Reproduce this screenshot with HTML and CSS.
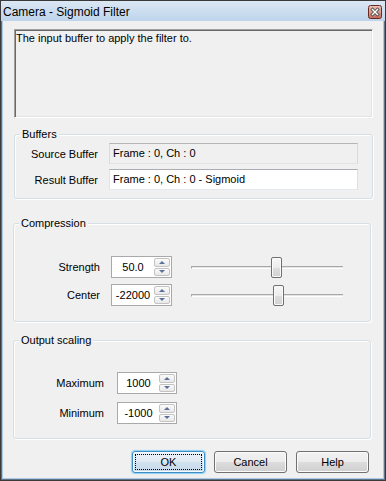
FILE: index.html
```html
<!DOCTYPE html>
<html>
<head>
<meta charset="utf-8">
<title>Camera - Sigmoid Filter</title>
<link rel="stylesheet" href="styles.css">
</head>
<body>
<div class="window">
  <div class="titlebar">
    <span class="title">Camera - Sigmoid Filter</span>
    <svg class="close" width="14" height="14" viewBox="0 0 14 14">
      <defs>
        <linearGradient id="cg" x1="0" y1="0" x2="0" y2="1">
          <stop offset="0" stop-color="#ecc3b9"/>
          <stop offset="0.5" stop-color="#dc9a8c"/>
          <stop offset="1" stop-color="#c46a5a"/>
        </linearGradient>
      </defs>
      <rect x="0.5" y="0.5" width="13" height="13" rx="2" fill="url(#cg)" stroke="#6b2a20"/>
      <path d="M4.5 4.5 L9.5 9.5 M9.5 4.5 L4.5 9.5" stroke="#555" stroke-width="3.2" stroke-linecap="square"/>
      <path d="M4.5 4.5 L9.5 9.5 M9.5 4.5 L4.5 9.5" stroke="#fff" stroke-width="1.4" stroke-linecap="square"/>
    </svg>
  </div>
  <div class="client">
    <div class="desc">The input buffer to apply the filter to.</div>

    <div class="group buffers">
      <div class="group-title">Buffers</div>
      <div class="bgrid">
        <span class="blabel">Source Buffer</span>
        <div class="edit disabled">Frame : 0, Ch : 0</div>
        <span class="blabel">Result Buffer</span>
        <div class="edit">Frame : 0, Ch : 0 - Sigmoid</div>
      </div>
    </div>

    <div class="group compression">
      <div class="group-title">Compression</div>
      <div class="rows crows">
        <div class="row">
          <span class="lbl">Strength</span>
          <div class="spin">
            <span class="val">50.0</span>
            <span class="btns"><span class="sb"><span class="up"></span></span><span class="sb"><span class="down"></span></span></span>
          </div>
          <div class="slider">
            <div class="track"></div>
            <div class="thumb" style="left:80px"></div>
          </div>
        </div>
        <div class="row">
          <span class="lbl">Center</span>
          <div class="spin">
            <span class="val">-22000</span>
            <span class="btns"><span class="sb"><span class="up"></span></span><span class="sb"><span class="down"></span></span></span>
          </div>
          <div class="slider">
            <div class="track"></div>
            <div class="thumb" style="left:82px"></div>
          </div>
        </div>
      </div>
    </div>

    <div class="group output">
      <div class="group-title">Output scaling</div>
      <div class="rows orows">
        <div class="row">
          <span class="lbl">Maximum</span>
          <div class="spin">
            <span class="val">1000</span>
            <span class="btns"><span class="sb"><span class="up"></span></span><span class="sb"><span class="down"></span></span></span>
          </div>
        </div>
        <div class="row">
          <span class="lbl">Minimum</span>
          <div class="spin">
            <span class="val">-1000</span>
            <span class="btns"><span class="sb"><span class="up"></span></span><span class="sb"><span class="down"></span></span></span>
          </div>
        </div>
      </div>
    </div>

    <div class="buttons">
      <button class="btn default"><span>OK</span></button>
      <button class="btn">Cancel</button>
      <button class="btn">Help</button>
    </div>
  </div>
</div>
</body>
</html>
```

FILE: styles.css
```css
html, body {
  margin: 0;
  padding: 0;
  background: #fff;
}
body {
  font-family: "Liberation Sans", Arial, sans-serif;
  font-size: 11px;
  color: #000;
}
.window {
  width: 386px;
  height: 481px;
  box-sizing: border-box;
  border: 1px solid #3a3a3a;
  background: #5f7286;
  display: flex;
  flex-direction: column;
}
.titlebar {
  height: 20px;
  flex: none;
  display: flex;
  align-items: center;
  justify-content: space-between;
  padding: 0 3px 0 2px;
  background: linear-gradient(#dbe7f4, #bed4eb);
}
.title {
  font-size: 12px;
  padding-top: 2px;
  color: #000;
}
.close {
  display: block;
  margin-top: 2px;
}
.client {
  flex: 1;
  margin: 0 1px 1px;
  border: 1px solid #a9c9e6;
  border-top: 0;
  background: #f0f0f0;
  padding: 8px 10px 0 11px;
  display: flex;
  flex-direction: column;
}
.desc {
  height: 89px;
  flex: none;
  box-sizing: border-box;
  border: 1px solid;
  border-color: #a0a0a0 #ffffff #ffffff #a0a0a0;
  box-shadow: inset 1px 1px 0 #696969, inset -1px -1px 0 #e3e3e3;
  padding: 2px 2px 0 1px;
  line-height: 13px;
}
.group {
  border: 1px solid #d5dfe5;
  border-radius: 3px;
  box-shadow: 1px 1px 0 #ffffff, inset 1px 1px 0 #ffffff;
  display: flex;
  flex-direction: column;
  flex: none;
}
.group-title {
  align-self: flex-start;
  margin: -7px 0 0 5px;
  padding: 0 2px;
  line-height: 13px;
  background: #f0f0f0;
}
.buffers {
  margin-top: 16px;
}
.bgrid {
  display: grid;
  grid-template-columns: 83px 249px;
  column-gap: 11px;
  row-gap: 5px;
  align-items: center;
  margin-top: 2px;
  padding-bottom: 8px;
}
.blabel {
  text-align: right;
}
.edit {
  height: 21px;
  box-sizing: border-box;
  border: 1px solid;
  border-color: #abadb3 #dbdfe6 #e3e9ef #e2e3ea;
  background: #fff;
  padding: 0 3px;
  line-height: 19px;
  white-space: nowrap;
}
.edit.disabled {
  background: #f0f0f0;
  border-color: #b5b5b5 #dadada #e3e3e3 #dadada;
}
.compression {
  margin: 24px 2px 0 -1px;
}
.output {
  margin: 18px 2px 0 -1px;
}
.rows {
  display: flex;
  flex-direction: column;
}
.crows {
  gap: 6px;
  margin-top: 26px;
  padding-bottom: 15px;
}
.orows {
  gap: 8px;
  margin-top: 25px;
  padding-bottom: 14px;
}
.row {
  display: flex;
  align-items: center;
  height: 22px;
}
.lbl {
  flex: none;
  text-align: right;
}
.crows .lbl {
  width: 86px;
  margin-right: 11px;
}
.orows .lbl {
  width: 90px;
  margin-right: 13px;
}
.spin {
  flex: none;
  display: flex;
  height: 22px;
  box-sizing: border-box;
  border: 1px solid #a9a9a9;
  background: #fff;
}
.crows .spin { width: 61px; }
.orows .spin { width: 60px; }
.val {
  flex: 1;
  text-align: center;
  line-height: 20px;
  white-space: nowrap;
}
.btns {
  width: 17px;
  flex: none;
  display: flex;
  flex-direction: column;
  gap: 1px;
  padding: 1px 1px 1px 0;
  box-sizing: border-box;
  background: #fff;
}
.sb {
  flex: 1;
  display: flex;
  align-items: center;
  justify-content: center;
  border: 1px solid #c3c3c3;
  border-radius: 2px;
  background: linear-gradient(#fbfbfb, #e8e8e8);
}
.up, .down {
  width: 0;
  height: 0;
  border-left: 3px solid transparent;
  border-right: 3px solid transparent;
}
.up {
  border-bottom: 3px solid #5a6f9a;
}
.down {
  border-top: 3px solid #5a6f9a;
}
.slider {
  flex: none;
  position: relative;
  margin-left: 19px;
  width: 152px;
  height: 22px;
  display: flex;
  align-items: center;
}
.track {
  flex: 1;
  height: 3px;
  box-sizing: border-box;
  border-top: 1px solid #a8a8a8;
  border-left: 1px solid #a8a8a8;
  border-bottom: 1px solid #ffffff;
  background: #e4e4e4;
}
.thumb {
  position: absolute;
  top: 1px;
  width: 11px;
  height: 21px;
  box-sizing: border-box;
  border: 1px solid #6f6f6f;
  border-radius: 2px;
  background: linear-gradient(#f7f7f7, #ececec 50%, #dddddd 52%, #d2d2d2);
  box-shadow: inset 0 0 0 1px #fafafa;
}
.buttons {
  display: flex;
  justify-content: flex-end;
  gap: 9px;
  margin-top: 12px;
  padding-right: 4px;
}
.btn {
  width: 73px;
  height: 22px;
  box-sizing: border-box;
  margin: 0;
  padding: 0;
  font: inherit;
  color: #000;
  border: 1px solid #707070;
  border-radius: 3px;
  background: linear-gradient(#f2f2f2, #ebebeb 50%, #dddddd 50%, #cfcfcf);
  box-shadow: inset 0 0 0 1px #fbfbfb;
}
.btn.default {
  border-color: #3c8dc4;
  background: linear-gradient(#eaf2f9, #e0eaf3 50%, #d2e2ef 50%, #c6daeb);
  box-shadow: 0 0 1px 1px #8fd0f2, inset 0 0 0 1px #f4fafd;
  outline: 1px dotted #000;
  outline-offset: -4px;
}
```
